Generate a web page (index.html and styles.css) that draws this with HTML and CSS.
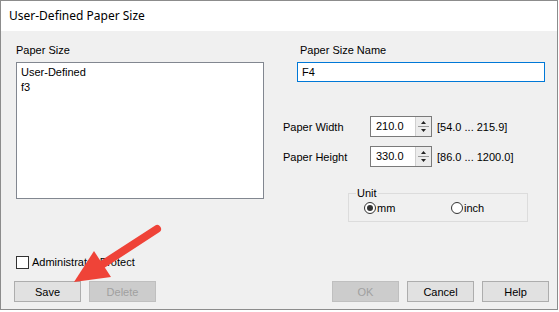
FILE: index.html
```html
<!DOCTYPE html>
<html lang="en">
<head>
    <meta charset="UTF-8">
    <title>User-Defined Paper Size</title>
    <link rel="stylesheet" href="styles.css">
</head>
<body>
    <div class="window">
        <div class="titlebar">User-Defined Paper Size</div>

        <div class="body">
            <div class="panes">
                <div class="pane-left">
                    <div class="label">Paper Size</div>
                    <div class="listbox">
                        <div class="list-item">User-Defined</div>
                        <div class="list-item">f3</div>
                    </div>
                </div>

                <div class="pane-right">
                    <div class="label name-label">Paper Size Name</div>
                    <div class="textbox">F4</div>

                    <div class="field-row first">
                        <span class="field-label">Paper Width</span>
                        <div class="spinbox">
                            <span class="spin-value">210.0</span>
                            <span class="spin-btn">
                                <svg width="15" height="19" viewBox="0 0 15 19">
                                    <path d="M5 7 L7.5 4 L10 7 Z" fill="#222"/>
                                    <line x1="2" y1="9.5" x2="13" y2="9.5" stroke="#9a9a9a"/>
                                    <path d="M5 12 L10 12 L7.5 15 Z" fill="#222"/>
                                </svg>
                            </span>
                        </div>
                        <span class="range">[54.0 ... 215.9]</span>
                    </div>

                    <div class="field-row">
                        <span class="field-label">Paper Height</span>
                        <div class="spinbox">
                            <span class="spin-value">330.0</span>
                            <span class="spin-btn">
                                <svg width="15" height="19" viewBox="0 0 15 19">
                                    <path d="M5 7 L7.5 4 L10 7 Z" fill="#222"/>
                                    <line x1="2" y1="9.5" x2="13" y2="9.5" stroke="#9a9a9a"/>
                                    <path d="M5 12 L10 12 L7.5 15 Z" fill="#222"/>
                                </svg>
                            </span>
                        </div>
                        <span class="range">[86.0 ... 1200.0]</span>
                    </div>

                    <fieldset class="unit-group">
                        <legend>Unit</legend>
                        <div class="radio-row">
                            <label class="radio radio-mm"><span class="radio-dot checked"></span>mm</label>
                            <label class="radio"><span class="radio-dot"></span>inch</label>
                        </div>
                    </fieldset>
                </div>
            </div>

            <div class="footer">
                <label class="checkbox"><span class="check-box"></span>Administrator Protect</label>
                <div class="buttons">
                    <button class="btn">Save</button>
                    <button class="btn" disabled>Delete</button>
                    <span class="spacer"></span>
                    <button class="btn" disabled>OK</button>
                    <button class="btn">Cancel</button>
                    <button class="btn">Help</button>
                </div>
            </div>
        </div>

        <!-- annotation arrow drawn over the dialog -->
        <svg class="arrow" width="558" height="310" viewBox="0 0 558 310">
            <line x1="157" y1="229" x2="100" y2="266" stroke="#ef4338" stroke-width="8" stroke-linecap="round"/>
            <polygon points="74,282 94,251 111,277" fill="#ef4338"/>
        </svg>
    </div>
</body>
</html>
```

FILE: styles.css
```css
body {
    margin: 0;
    font-family: "Liberation Sans", Arial, sans-serif;
    font-size: 11px;
    color: #000;
    background: #fff;
}

.window {
    position: relative;
    width: 558px;
    height: 310px;
    box-sizing: border-box;
    border: 1px solid #8c8c8c;
    background: #f0f0f0;
    display: flex;
    flex-direction: column;
}

.titlebar {
    flex: none;
    height: 30px;
    line-height: 30px;
    padding-left: 8px;
    background: #fff;
    font-family: "Noto Sans", sans-serif;
    font-size: 12px;
}

.body {
    flex: 1;
    display: flex;
    flex-direction: column;
    padding: 11px 8px 7px 13px;
}

.panes {
    display: flex;
    margin-left: 2px;
}

.label {
    line-height: 16px;
    margin-bottom: 4px;
}

.pane-left {
    width: 248px;
}

.listbox {
    height: 137px;
    box-sizing: border-box;
    border: 1px solid #828790;
    background: #fff;
    padding: 2px 4px;
}

.list-item {
    line-height: 15px;
}

.pane-right {
    margin-left: 19px;
    width: 262px;
}

.name-label {
    padding-left: 17px;
}

.textbox {
    margin-left: 14px;
    height: 20px;
    box-sizing: border-box;
    border: 1px solid #0078d7;
    background: #fff;
    line-height: 18px;
    padding-left: 4px;
}

.field-row {
    display: flex;
    align-items: center;
    margin-top: 9px;
    height: 21px;
}

.field-row.first {
    margin-top: 34px;
}

.field-label {
    width: 87px;
}

.spinbox {
    display: flex;
    width: 62px;
    height: 21px;
    box-sizing: border-box;
    border: 1px solid #7a7a7a;
    background: #fff;
}

.spin-value {
    flex: 1;
    line-height: 19px;
    padding-left: 5px;
}

.spin-btn {
    width: 15px;
    background: #ececec;
    border-left: 1px solid #d0d0d0;
}

.spin-btn svg {
    display: block;
}

.range {
    margin-left: 5px;
}

.unit-group {
    margin: 19px 0 0 65px;
    width: 180px;
    box-sizing: border-box;
    border: 1px solid #dcdcdc;
    padding: 0 0 5px 7px;
}

.unit-group legend {
    padding: 0 1px;
    line-height: 14px;
}

.radio-row {
    display: flex;
    margin-left: 8px;
    line-height: 16px;
}

.radio {
    display: flex;
    align-items: center;
}

.radio-mm {
    width: 87px;
}

.radio-dot {
    width: 12px;
    height: 12px;
    box-sizing: border-box;
    border: 1px solid #333;
    border-radius: 50%;
    background: #fff;
    margin-right: 1px;
    position: relative;
}

.radio-dot.checked::after {
    content: "";
    position: absolute;
    left: 2px;
    top: 2px;
    width: 6px;
    height: 6px;
    border-radius: 50%;
    background: #333;
}

.footer {
    margin-top: auto;
}

.checkbox {
    display: flex;
    align-items: center;
    line-height: 16px;
    margin-left: 2px;
}

.check-box {
    width: 13px;
    height: 13px;
    box-sizing: border-box;
    border: 1px solid #333;
    background: #fff;
    margin-right: 3px;
}

.buttons {
    display: flex;
    gap: 8px;
    margin-top: 11px;
}

.spacer {
    flex: 1;
}

.btn {
    width: 67px;
    height: 21px;
    box-sizing: border-box;
    border: 1px solid #adadad;
    background: #e1e1e1;
    font-family: inherit;
    font-size: 11px;
    color: #000;
    padding: 0;
}

.btn:disabled {
    background: #cccccc;
    border-color: #bfbfbf;
    color: #a0a0a0;
}

.arrow {
    position: absolute;
    left: -1px;
    top: -1px;
    pointer-events: none;
}
```
